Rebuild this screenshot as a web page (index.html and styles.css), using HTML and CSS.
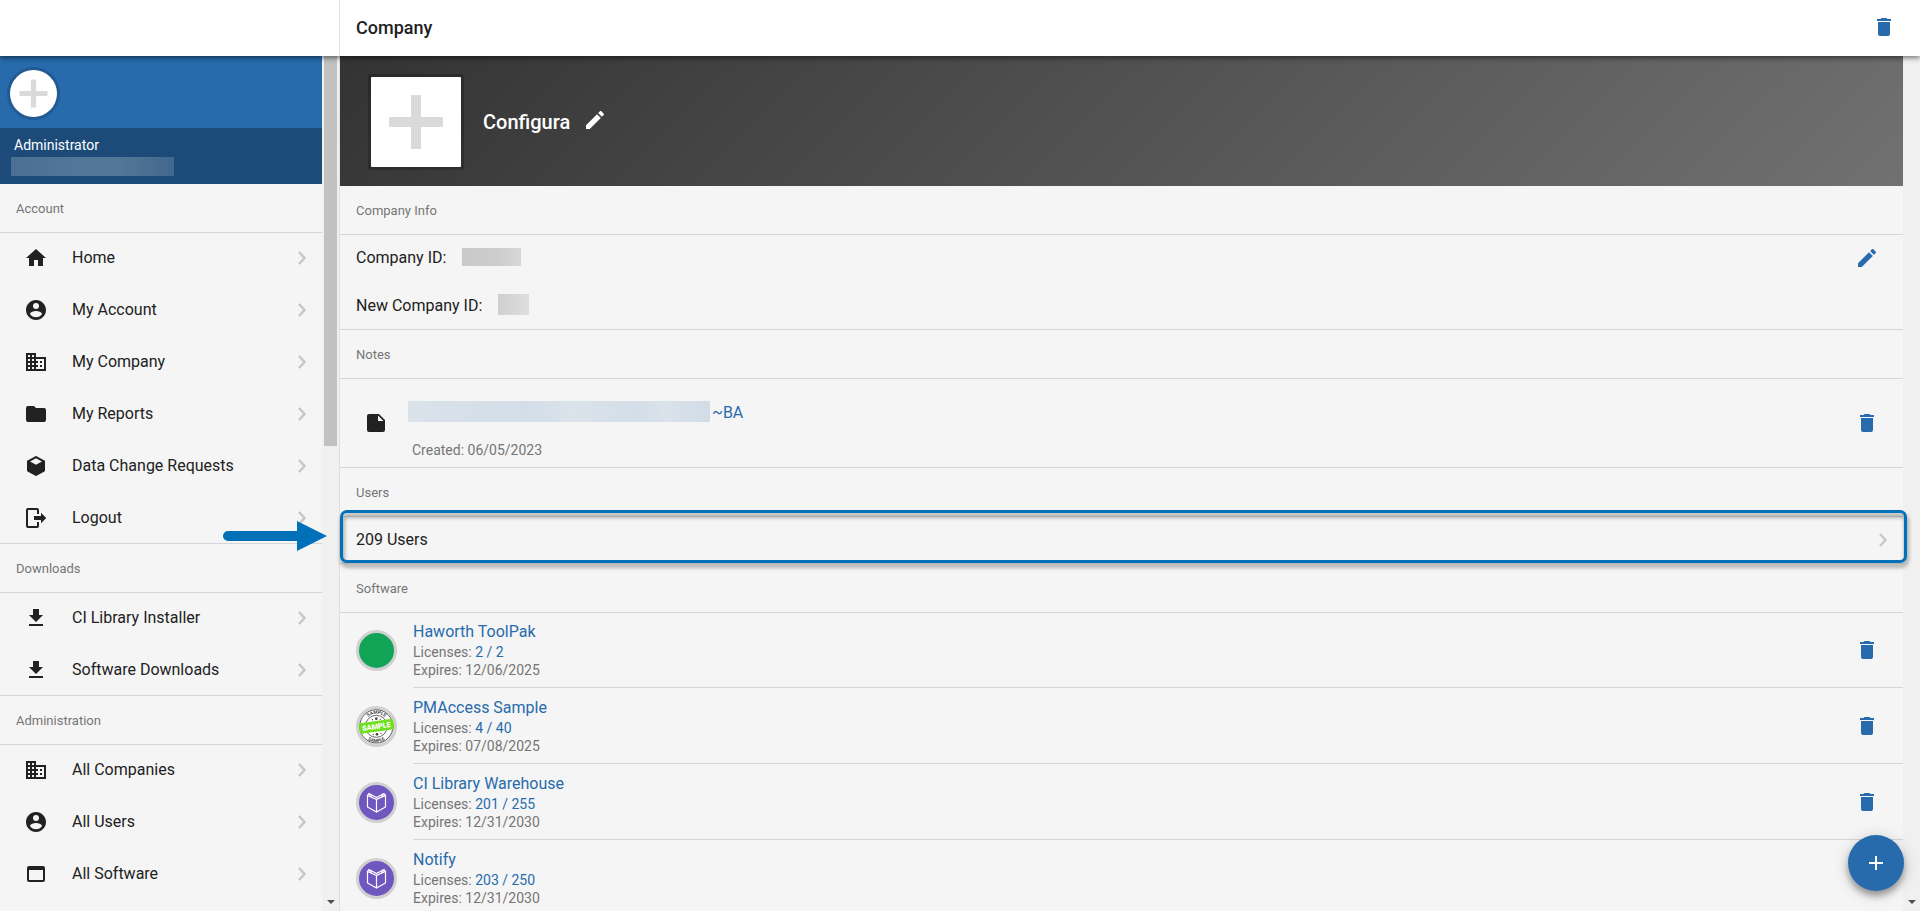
FILE: index.html
```html
<!DOCTYPE html>
<html lang="en">
<head>
	<meta charset="UTF-8">
	<meta name="viewport" content="width=device-width, initial-scale=1">
	<title>Company</title>
	<link rel="stylesheet" href="styles.css">
</head>
<body>
	<!-- icon set -->
	<svg class="sprite" aria-hidden="true">
		<symbol id="i-home" viewBox="0 0 24 24"><path d="M10 20v-6h4v6h5v-8h3L12 3 2 12h3v8z"/></symbol>
		<symbol id="i-user" viewBox="0 0 24 24"><path d="M12 2C6.5 2 2 6.5 2 12s4.500 10 10 10 10-4.500 10-10S17.500 2 12 2zm0 3a3 3 0 1 1 0 6 3 3 0 0 1 0-6zm0 14.200a7.200 7.200 0 0 1-6-3.220c.03-1.990 4-3.080 6-3.080s5.970 1.090 6 3.080a7.200 7.200 0 0 1-6 3.220z"/></symbol>
		<symbol id="i-company" viewBox="0 0 24 24"><path d="M12 7V3H2v18h20V7H12zM6 19H4v-2h2v2zm0-4H4v-2h2v2zm0-4H4V9h2v2zm0-4H4V5h2v2zm4 12H8v-2h2v2zm0-4H8v-2h2v2zm0-4H8V9h2v2zm0-4H8V5h2v2zm10 12h-8v-2h2v-2h-2v-2h2v-2h-2V9h8v10zm-2-8h-2v2h2v-2zm0 4h-2v2h2v-2z"/></symbol>
		<symbol id="i-folder" viewBox="0 0 24 24"><path d="M10 4H4a2 2 0 0 0-2 2v12a2 2 0 0 0 2 2h16a2 2 0 0 0 2-2V8a2 2 0 0 0-2-2h-8z"/></symbol>
		<symbol id="i-cube" viewBox="0 0 24 24"><path d="M21 16.500c0 .38-.21.710-.53.880l-7.900 4.440c-.16.120-.36.180-.57.180s-.41-.06-.57-.18l-7.900-4.440A.99.990 0 0 1 3 16.500v-9c0-.38.210-.71.530-.88l7.900-4.440c.16-.12.360-.18.570-.18s.41.060.57.180l7.900 4.440c.32.170.53.500.53.880v9zM12 4.150L6.040 7.500 12 10.850l5.960-3.350L12 4.150z"/></symbol>
		<symbol id="i-logout" viewBox="0 0 24 24"><path d="M17 17.250V14h-7v-4h7V6.750L22.250 12 17 17.250M13 2a2 2 0 0 1 2 2v4h-2V4H4v16h9v-4h2v4a2 2 0 0 1-2 2H4a2 2 0 0 1-2-2V4a2 2 0 0 1 2-2h9z"/></symbol>
		<symbol id="i-download" viewBox="0 0 24 24"><path d="M5 20h14v-2H5m14-9h-4V3H9v6H5l7 7 7-7z"/></symbol>
		<symbol id="i-window" viewBox="0 0 24 24"><path d="M19 4H5a2 2 0 0 0-2 2v12a2 2 0 0 0 2 2h14a2 2 0 0 0 2-2V6a2 2 0 0 0-2-2zm0 14H5V8h14v10z"/></symbol>
		<symbol id="i-note" viewBox="0 0 24 24"><path d="M14 10V4.500l5.500 5.500M5 3a2 2 0 0 0-2 2v14a2 2 0 0 0 2 2h14a2 2 0 0 0 2-2V9l-6-6H5z"/></symbol>
		<symbol id="i-pencil" viewBox="0 0 24 24"><path d="M20.710 7.040c.39-.39.390-1.040 0-1.410l-2.340-2.340c-.37-.39-1.020-.39-1.410 0l-1.840 1.830 3.750 3.750M3 17.250V21h3.750L17.810 9.930l-3.750-3.750L3 17.250z"/></symbol>
		<symbol id="i-trash" viewBox="0 0 24 24"><path d="M19 4h-3.500l-1-1h-5l-1 1H5v2h14M6 19a2 2 0 0 0 2 2h8a2 2 0 0 0 2-2V7H6v12z"/></symbol>
		<symbol id="i-plus" viewBox="0 0 16 16"><path d="M7 1h2v6h6v2H9v6H7V9H1V7h6z"/></symbol>
		<symbol id="i-photo" viewBox="0 0 90 90"><rect x="18" y="40" width="54" height="10" rx="1"/><rect x="40" y="18" width="10" height="54" rx="1"/></symbol>
		<symbol id="i-chevron" viewBox="0 0 8 14"><path d="M1 1l5.500 6L1 13" fill="none" stroke="currentColor" stroke-width="2.500"/></symbol>
		<symbol id="i-down" viewBox="0 0 8 4"><path d="M0 0h8L4 4z"/></symbol>
		<symbol id="i-book" viewBox="0 0 35 35"><path d="M17.500 14.500L8.500 10.500V22l9 5 9-5V10.500l-9 4V27M8.500 10.500L10 8.500l7.500 4 7.500-4 1.500 2M13 12.500l-3-4M22 12.500l3-4" fill="none" stroke="#fff" stroke-width="1.200"/></symbol>
	</svg>

	<div class="app">
		<header class="topbar">
			<div class="topbar-side"></div>
			<div class="topbar-main">
				<h1>Company</h1>
				<button class="icon-btn" type="button" aria-label="Delete company"><svg class="icon"><use href="#i-trash"/></svg></button>
			</div>
		</header>

		<div class="panels">
			<aside class="sidebar">
				<div class="sidebar-content">
					<div class="profile">
						<button class="avatar" type="button" aria-label="Add photo"><svg><use href="#i-photo"/></svg></button>
					</div>
					<div class="profile-info">
						<strong>Administrator</strong>
						<span class="masked masked-user"></span>
					</div>
					<nav>
						<h2>Account</h2>
						<ul class="list menu">
							<li><a href="#"><svg class="icon"><use href="#i-home"/></svg><span>Home</span><svg class="chevron"><use href="#i-chevron"/></svg></a></li>
							<li><a href="#"><svg class="icon"><use href="#i-user"/></svg><span>My Account</span><svg class="chevron"><use href="#i-chevron"/></svg></a></li>
							<li><a href="#"><svg class="icon"><use href="#i-company"/></svg><span>My Company</span><svg class="chevron"><use href="#i-chevron"/></svg></a></li>
							<li><a href="#"><svg class="icon"><use href="#i-folder"/></svg><span>My Reports</span><svg class="chevron"><use href="#i-chevron"/></svg></a></li>
							<li><a href="#"><svg class="icon"><use href="#i-cube"/></svg><span>Data Change Requests</span><svg class="chevron"><use href="#i-chevron"/></svg></a></li>
							<li><a href="#"><svg class="icon"><use href="#i-logout"/></svg><span>Logout</span><svg class="chevron"><use href="#i-chevron"/></svg></a></li>
						</ul>
						<h2>Downloads</h2>
						<ul class="list menu">
							<li><a href="#"><svg class="icon"><use href="#i-download"/></svg><span>CI Library Installer</span><svg class="chevron"><use href="#i-chevron"/></svg></a></li>
							<li><a href="#"><svg class="icon"><use href="#i-download"/></svg><span>Software Downloads</span><svg class="chevron"><use href="#i-chevron"/></svg></a></li>
						</ul>
						<h2>Administration</h2>
						<ul class="list menu menu-last">
							<li><a href="#"><svg class="icon"><use href="#i-company"/></svg><span>All Companies</span><svg class="chevron"><use href="#i-chevron"/></svg></a></li>
							<li><a href="#"><svg class="icon"><use href="#i-user"/></svg><span>All Users</span><svg class="chevron"><use href="#i-chevron"/></svg></a></li>
							<li><a href="#"><svg class="icon"><use href="#i-window"/></svg><span>All Software</span><svg class="chevron"><use href="#i-chevron"/></svg></a></li>
						</ul>
					</nav>
				</div>
				<div class="scrollbar">
					<div class="thumb"></div>
					<svg class="scroll-down"><use href="#i-down"/></svg>
				</div>
			</aside>

			<main class="main">
				<div class="content">
					<div class="hero">
						<button class="logo" type="button" aria-label="Add logo"><svg><use href="#i-photo"/></svg></button>
						<strong>Configura</strong>
						<button class="icon-btn" type="button" aria-label="Edit name"><svg class="icon"><use href="#i-pencil"/></svg></button>
					</div>

					<h2>Company Info</h2>
					<div class="list info">
						<div class="row">
							<span>Company ID:</span>
							<span class="masked masked-id"></span>
							<button class="icon-btn" type="button" aria-label="Edit company info"><svg class="icon"><use href="#i-pencil"/></svg></button>
						</div>
						<div class="row">
							<span>New Company ID:</span>
							<span class="masked masked-new-id"></span>
						</div>
					</div>

					<h2>Notes</h2>
					<div class="list note">
						<svg class="icon"><use href="#i-note"/></svg>
						<div class="note-text">
							<a href="#"><span class="masked masked-note"></span>~BA</a>
							<small>Created: 06/05/2023</small>
						</div>
						<button class="icon-btn" type="button" aria-label="Delete note"><svg class="icon"><use href="#i-trash"/></svg></button>
					</div>

					<h2>Users</h2>
					<div class="list users">
						<a class="row" href="#"><span>209 Users</span><svg class="chevron"><use href="#i-chevron"/></svg></a>
						<div class="highlight"></div>
						<svg class="arrow" viewBox="0 0 104 30"><path d="M5 10h69V0l30 15-30 15V20H5a5 5 0 0 1 0-10z"/></svg>
					</div>

					<h2>Software</h2>
					<ul class="list software">
						<li>
							<span class="badge green"></span>
							<div class="software-text">
								<div>
									<a href="#">Haworth ToolPak</a>
									<small>Licenses: <b>2 / 2</b></small>
									<small>Expires: 12/06/2025</small>
								</div>
								<button class="icon-btn" type="button" aria-label="Delete Haworth ToolPak"><svg class="icon"><use href="#i-trash"/></svg></button>
							</div>
						</li>
						<li>
							<span class="badge">
								<svg viewBox="0 0 105 105">
									<defs>
										<path id="arc-top" d="M15 52a37 37 0 0 1 75 0"/>
										<path id="arc-bottom" d="M5 52a47 47 0 0 0 95 0"/>
									</defs>
									<circle cx="52" cy="52" r="50" fill="#fff" stroke="#555" stroke-width="3"/>
									<circle cx="52" cy="52" r="33" fill="none" stroke="#666" stroke-width="3"/>
									<g class="stamp-arc">
										<text><textPath href="#arc-top" startOffset="50%">SAMPLE</textPath></text>
										<text><textPath href="#arc-bottom" startOffset="50%">SAMPLE</textPath></text>
									</g>
									<g fill="#444"><circle cx="40" cy="32" r="2"/><circle cx="52" cy="29" r="4"/><circle cx="64" cy="31" r="2"/><circle cx="43" cy="77" r="2"/><circle cx="54" cy="76" r="4"/><circle cx="66" cy="73" r="2"/></g>
									<g transform="rotate(-8 52 52)">
										<rect x="-2" y="36" width="109" height="32" fill="#6fe01c"/>
										<text class="stamp-label" x="52" y="60">SAMPLE</text>
									</g>
								</svg>
							</span>
							<div class="software-text">
								<div>
									<a href="#">PMAccess Sample</a>
									<small>Licenses: <b>4 / 40</b></small>
									<small>Expires: 07/08/2025</small>
								</div>
								<button class="icon-btn" type="button" aria-label="Delete PMAccess Sample"><svg class="icon"><use href="#i-trash"/></svg></button>
							</div>
						</li>
						<li>
							<span class="badge purple"><svg><use href="#i-book"/></svg></span>
							<div class="software-text">
								<div>
									<a href="#">CI Library Warehouse</a>
									<small>Licenses: <b>201 / 255</b></small>
									<small>Expires: 12/31/2030</small>
								</div>
								<button class="icon-btn" type="button" aria-label="Delete CI Library Warehouse"><svg class="icon"><use href="#i-trash"/></svg></button>
							</div>
						</li>
						<li>
							<span class="badge purple"><svg><use href="#i-book"/></svg></span>
							<div class="software-text">
								<div>
									<a href="#">Notify</a>
									<small>Licenses: <b>203 / 250</b></small>
									<small>Expires: 12/31/2030</small>
								</div>
							</div>
						</li>
					</ul>
				</div>
				<div class="scrollbar">
					<svg class="scroll-down"><use href="#i-down"/></svg>
				</div>
			</main>
		</div>
		<button class="fab" type="button" aria-label="Add"><svg><use href="#i-plus"/></svg></button>
	</div>
</body>
</html>
```
FILE: styles.css
```css
* {
	box-sizing: border-box;
}
body {
	margin: 0;
	font-family: Roboto, "Liberation Sans", sans-serif;
	font-size: 16px;
	line-height: 24px;
	color: #212121;
	background-color: #f5f5f5;
}
a {
	color: #276bac;
	text-decoration: none;
}
ul {
	margin: 0;
	padding: 0;
	list-style: none;
}
button {
	border: 0;
	padding: 0;
	background: none;
	cursor: pointer;
}
svg {
	display: block;
	fill: currentColor;
	flex: none;
}
.sprite {
	display: none;
}
.icon {
	width: 24px;
	height: 24px;
}
.icon-btn {
	color: #276bac;
}
.chevron {
	width: 8px;
	height: 14px;
	color: #c7c7cc;
}
.app {
	display: flex;
	flex-direction: column;
	height: 100vh;
	overflow: hidden;
}

/* top bar */
.topbar {
	display: flex;
	flex: none;
	height: 56px;
	background-color: #fff;
	position: relative;
	z-index: 2;
	box-shadow: 0 2px 5px rgba(0, 0, 0, .5);
}
.topbar-side {
	width: 340px;
	border-right: 1px solid #e0e0e0;
}
.topbar-main {
	flex: 1;
	display: flex;
	align-items: center;
	justify-content: space-between;
	padding: 0 24px 2px 16px;
}
h1 {
	margin: 0;
	padding-top: 2px;
	font-size: 18px;
	font-weight: 500;
}
h2 {
	margin: 0;
	padding: 2px 16px 0;
	font-size: 13px;
	font-weight: 400;
	line-height: 46px;
	color: #757575;
}
.panels {
	flex: 1;
	display: flex;
	min-height: 0;
}

/* lists draw their own top and bottom hairline */
.list {
	box-shadow: inset 0 1px #d6d6d8, inset 0 -1px #d6d6d8;
}

/* sidebar */
.sidebar {
	display: flex;
	flex: none;
	width: 340px;
	border-right: 1px solid #e0e0e0;
}
.sidebar-content {
	flex: 1;
	overflow: hidden;
}
.profile {
	display: flex;
	align-items: center;
	height: 72px;
	padding: 2px 10px 0;
	background-color: #276bac;
}
.avatar {
	width: 47px;
	height: 47px;
	border-radius: 50%;
	background-color: #fff;
	color: #dadada;
	box-shadow: 0 0 0 3px rgba(0, 0, 0, .15);
}
.avatar svg {
	width: 47px;
	height: 47px;
}
.profile-info {
	height: 56px;
	padding: 5px 11px;
	background-color: #1c4b79;
}
.profile-info strong {
	display: block;
	padding-left: 3px;
	color: #fff;
	font-size: 14px;
	font-weight: 400;
}
.masked {
	display: block;
}
.masked-user {
	width: 163px;
	height: 19px;
	background: linear-gradient(90deg, #4b6f93, #527699 40%, #537798 65%, #41678c);
}
.menu a {
	display: flex;
	align-items: center;
	gap: 24px;
	height: 52px;
	padding: 0 16px 0 24px;
	color: #212121;
}
.menu span {
	flex: 1;
}
.menu-last {
	padding-bottom: 52px;
}
.scrollbar {
	display: flex;
	flex-direction: column;
	align-items: center;
	justify-content: space-between;
	flex: none;
	width: 17px;
	padding-bottom: 7px;
	background-color: #f0f0f0;
}
.thumb {
	width: 13px;
	height: 46%;
	background-color: #c1c1c1;
}
.scroll-down {
	width: 8px;
	height: 4px;
	margin-top: auto;
	color: #505050;
}

/* main */
.main {
	flex: 1;
	display: flex;
	min-width: 0;
}
.content {
	flex: 1;
	min-width: 0;
}
.hero {
	display: flex;
	align-items: center;
	height: 130px;
	padding: 2px 31px 0;
	color: #fff;
	background: linear-gradient(135deg, #333, #717171);
}
.hero strong {
	padding: 0 13px 0 22px;
	font-size: 20px;
	font-weight: 500;
}
.hero .icon-btn {
	padding-bottom: 4px;
	color: #fff;
}
.logo {
	width: 90px;
	height: 90px;
	border-radius: 1px;
	background-color: #fff;
	color: #dadada;
	box-shadow: 0 0 0 3px rgba(0, 0, 0, .2);
}
.logo svg {
	width: 90px;
	height: 90px;
}
.row {
	display: flex;
	align-items: center;
	height: 48px;
	padding: 0 16px;
	color: #212121;
}
.info .row {
	gap: 16px;
	padding-right: 24px;
}
.info .masked {
	margin-bottom: 3px;
}
.info .icon-btn {
	margin-left: auto;
}
.masked-id {
	width: 59px;
	height: 18px;
	background: linear-gradient(90deg, #c9c9c9, #cdcdcd 60%, #d6d7d9);
}
.masked-new-id {
	width: 31px;
	height: 21px;
	background: linear-gradient(90deg, #cfcfcf, #dedede);
}
.note {
	display: flex;
	align-items: center;
	gap: 20px;
	height: 90px;
	padding: 0 24px;
}
.note-text {
	flex: 1;
	padding-top: 14px;
}
.note-text a {
	display: flex;
	align-items: flex-start;
	gap: 2px;
	margin-bottom: 16px;
}
.masked-note {
	width: 302px;
	height: 21px;
	background: linear-gradient(90deg, #dae2ea, #d3dee8 40%, #dbe3ea 55%, #d3dee8 75%, #dae2ea 85%, #d1dce7);
}
small {
	display: block;
	font-size: 14px;
	line-height: 18px;
	color: #757575;
}
.note-text small {
	padding-left: 4px;
}

/* users row with its callout */
.users {
	position: relative;
}
.users .row {
	justify-content: space-between;
}
.highlight {
	position: absolute;
	top: -6px;
	right: -4px;
	bottom: 1px;
	left: 0;
	z-index: 1;
	border: 3px solid #0070b8;
	border-radius: 7px;
	filter: drop-shadow(1px 4px 2px rgba(0, 0, 0, .45));
	pointer-events: none;
}
.arrow {
	position: absolute;
	top: 5px;
	left: -117px;
	z-index: 1;
	width: 104px;
	height: 30px;
	color: #0070b8;
}

/* software */
.software li {
	display: flex;
	align-items: center;
	gap: 16px;
	padding-left: 16px;
}
.software-text {
	flex: 1;
	display: flex;
	align-items: center;
	justify-content: space-between;
	height: 76px;
	padding-right: 24px;
	border-bottom: 1px solid #d6d6d8;
}
.software-text a {
	display: block;
	margin-bottom: -1px;
}
.software b {
	font-weight: 400;
	color: #276bac;
}
.badge {
	display: block;
	width: 41px;
	height: 41px;
	border: 3px solid #d0d0d0;
	border-radius: 50%;
	overflow: hidden;
}
.badge svg {
	width: 35px;
	height: 35px;
}
.green {
	background-color: #12a456;
}
.purple {
	background-color: #7057c0;
}
.stamp-arc {
	font-size: 14px;
	font-weight: 700;
	fill: #444;
	text-anchor: middle;
}
.stamp-label {
	font-size: 22px;
	font-weight: 900;
	fill: #fff;
	text-anchor: middle;
}
.fab {
	position: fixed;
	right: 16px;
	bottom: 20px;
	z-index: 3;
	display: flex;
	align-items: center;
	justify-content: center;
	width: 56px;
	height: 56px;
	border-radius: 50%;
	color: #fff;
	background-color: #276bac;
	box-shadow: 0 5px 6px rgba(0, 0, 0, .3), 0 3px 16px rgba(0, 0, 0, .2);
}
.fab svg {
	width: 16px;
	height: 16px;
}
```
